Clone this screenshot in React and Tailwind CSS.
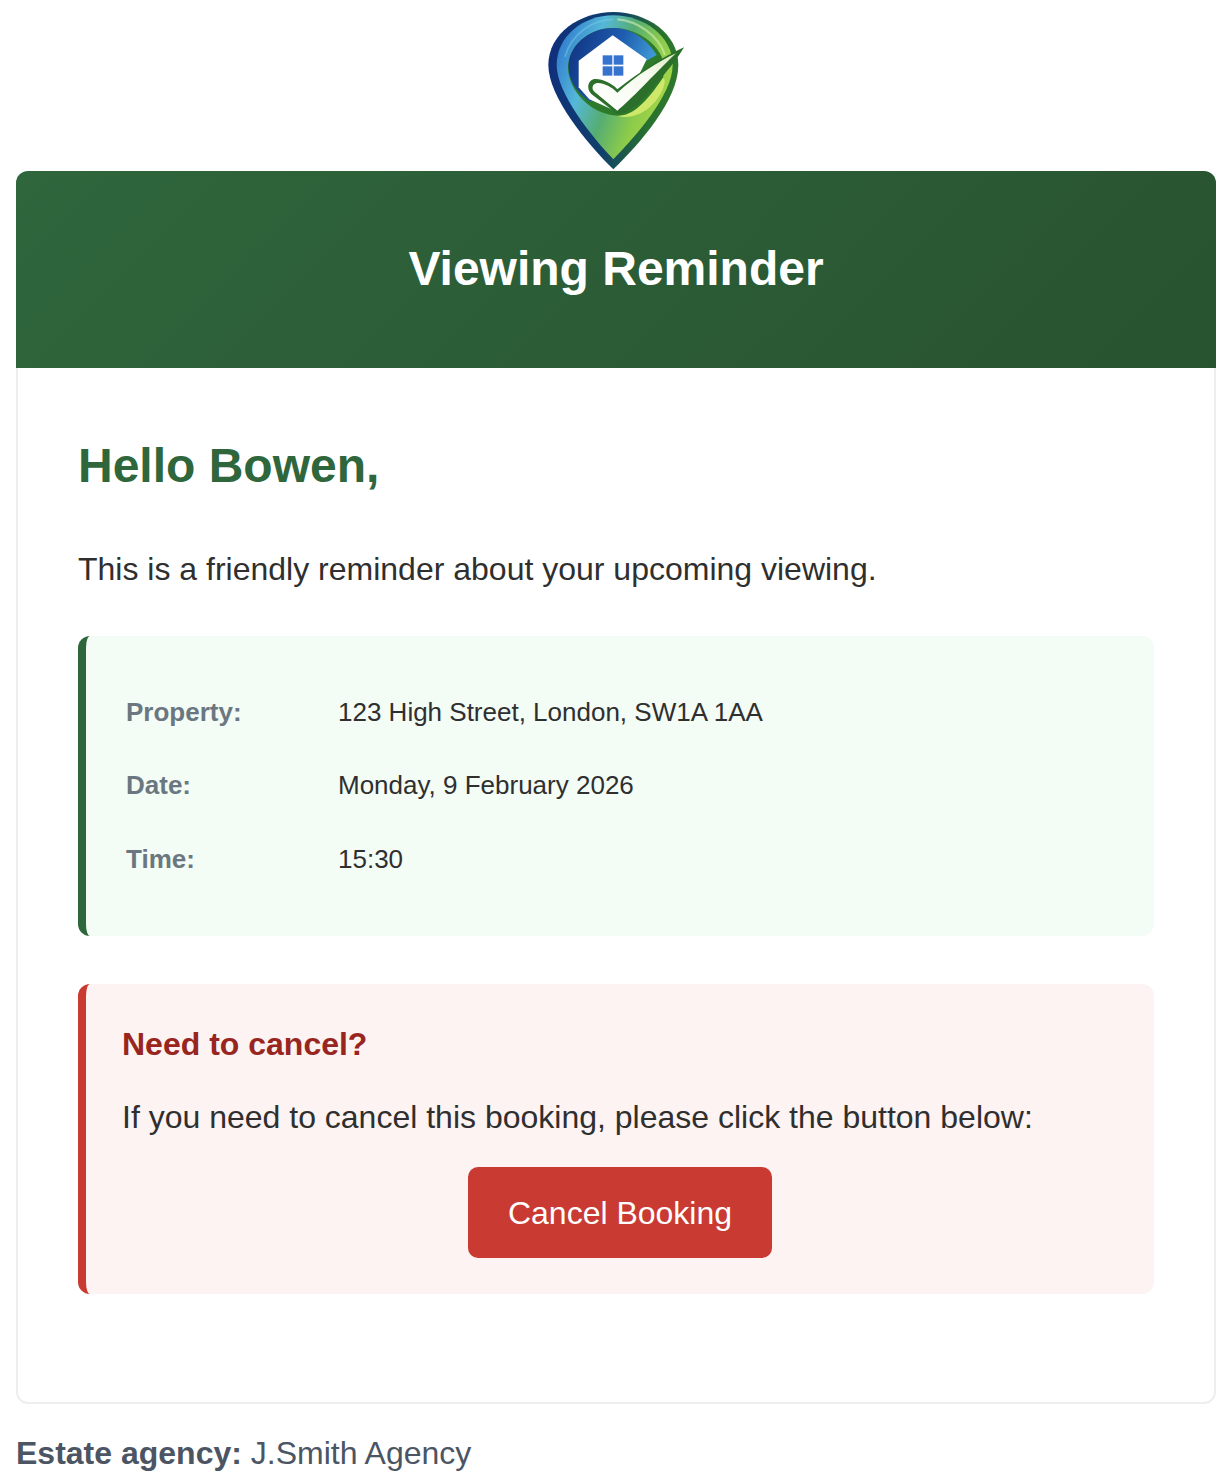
function Logo() {
  return (
    <svg width="170" height="171" viewBox="0 0 510 513" className="block">
      <defs>
        <linearGradient id="rim" x1="0" y1="0.3" x2="1" y2="0.45">
          <stop offset="0" stopColor="#0f2f7c" />
          <stop offset="0.5" stopColor="#10406a" />
          <stop offset="0.8" stopColor="#27702f" />
          <stop offset="1" stopColor="#2f7a2c" />
        </linearGradient>
        <linearGradient id="band" x1="0" y1="0.1" x2="1" y2="0.55">
          <stop offset="0" stopColor="#2b72cc" />
          <stop offset="0.32" stopColor="#55b8d8" />
          <stop offset="0.55" stopColor="#55ad72" />
          <stop offset="0.78" stopColor="#8ccb4a" />
          <stop offset="1" stopColor="#a8d848" />
        </linearGradient>
        <linearGradient id="inner" x1="0" y1="0" x2="1" y2="0.3">
          <stop offset="0" stopColor="#0f2f7c" />
          <stop offset="0.6" stopColor="#1f5db0" />
          <stop offset="1" stopColor="#3f9ad6" />
        </linearGradient>
        <linearGradient id="tick" x1="0" y1="1" x2="1" y2="0">
          <stop offset="0" stopColor="#ffffff" />
          <stop offset="0.65" stopColor="#f6faee" />
          <stop offset="1" stopColor="#dcecc0" />
        </linearGradient>
      </defs>
      <path d="M250 36C150 36 55 100 55 195C55 290 170 430 250 508C330 430 445 300 445 195C445 100 350 36 250 36Z" fill="url(#rim)" />
      <path d="M250 46C160 46 80 108 80 195C80 280 185 410 250 478C315 410 428 285 428 195C428 108 340 46 250 46Z" fill="url(#band)" />
      <path d="M250 58C190 58 125 100 105 170" fill="none" stroke="#7fd2ea" strokeWidth="5" opacity="0.45" />
      <path d="M262 58C320 62 385 105 405 165" fill="none" stroke="#d6edb0" strokeWidth="7" opacity="0.6" />
      <path d="M250 84C175 84 112 140 114 205C116 270 180 345 265 347C350 347 402 275 402 205C402 140 325 84 250 84Z" fill="#2c7a2a" />
      <path d="M250 84C175 84 112 140 116 205C118 250 150 285 180 305L300 210L380 165C350 115 300 84 250 84Z" fill="url(#inner)" />
      <path d="M248 106L146 182L146 262L178 298L262 335L310 260L350 178Z" fill="#ffffff" />
      <rect x="218" y="166" width="29" height="28" fill="#3573cf" />
      <rect x="251" y="166" width="29" height="28" fill="#3573cf" />
      <rect x="218" y="199" width="29" height="28" fill="#3573cf" />
      <rect x="251" y="199" width="29" height="28" fill="#3573cf" />
      <path d="M262 348C310 348 350 305 398 235C412 230 405 285 352 328C320 350 290 355 262 348Z" fill="#cfe86a" />
      <path d="M462 142C400 170 330 215 262 268C245 248 210 234 190 238C172 244 170 268 184 282L262 342C300 342 340 300 370 262C410 215 440 180 462 142Z" fill="#2b6f2a" />
      <path d="M438 160C385 185 320 225 262 278C245 260 215 246 198 250C186 254 184 268 194 276L262 332C300 303 370 225 438 160Z" fill="url(#tick)" />
    </svg>
  );
}

function Row({ label, value, className = "" }) {
  return (
    <div className={`flex items-center h-[27px] ${className}`}>
      <div className="w-[212px] font-bold text-[#6b7780]">{label}</div>
      <div className="text-[#2f2f2f]">{value}</div>
    </div>
  );
}

export default function App() {
  return (
    <div className="bg-white font-['Liberation_Sans',Arial,sans-serif] w-[1232px] h-[1476px] overflow-hidden">
      <div className="flex justify-center ml-[-2px]">
        <Logo />
      </div>
      <div className="mx-4 w-[1200px] rounded-[12px] border-2 border-[#eceef0] h-[1233px]">
        <div className="-m-[2px] h-[197px] rounded-t-[12px] bg-[linear-gradient(135deg,#2f663c,#28532f)] flex items-center justify-center pb-[2px]">
          <h1 className="text-[48px] leading-none font-bold text-white">Viewing Reminder</h1>
        </div>
        <div className="px-[60px] pt-[74px]">
          <h2 className="text-[48px] leading-[52px] font-bold text-[#2f663c]">Hello Bowen,</h2>
          <p className="mt-[55px] text-[32px] leading-[44px] text-[#2f2f2f]">This is a friendly reminder about your upcoming viewing.</p>
          <div className="mt-[45px] h-[300px] rounded-[12px] bg-[#f3fcf5] border-l-[8px] border-[#2f663c] pl-[40px] pt-[63px] text-[26px]">
            <Row label="Property:" value="123 High Street, London, SW1A 1AA" />
            <Row label="Date:" value="Monday, 9 February 2026" className="mt-[46px]" />
            <Row label="Time:" value="15:30" className="mt-[47px]" />
          </div>
          <div className="mt-[48px] h-[310px] rounded-[12px] bg-[#fcf3f2] border-l-[8px] border-[#c93a32] pl-[36px] pt-[40px]">
            <h3 className="text-[32px] leading-[40px] font-bold text-[#982520]">Need to cancel?</h3>
            <p className="mt-[33px] text-[32px] leading-[40px] text-[#2f2f2f]">If you need to cancel this booking, please click the button below:</p>
            <div className="mt-[30px] flex justify-center pr-[36px]">
              <div className="w-[304px] h-[91px] rounded-[10px] bg-[#c93a32] text-white text-[32px] flex items-center justify-center">Cancel Booking</div>
            </div>
          </div>
        </div>
      </div>
      <p className="mx-4 mt-[29px] text-[32px] leading-[40px] text-[#4b5563]"><span className="font-bold">Estate agency:</span> J.Smith Agency</p>
    </div>
  );
}
